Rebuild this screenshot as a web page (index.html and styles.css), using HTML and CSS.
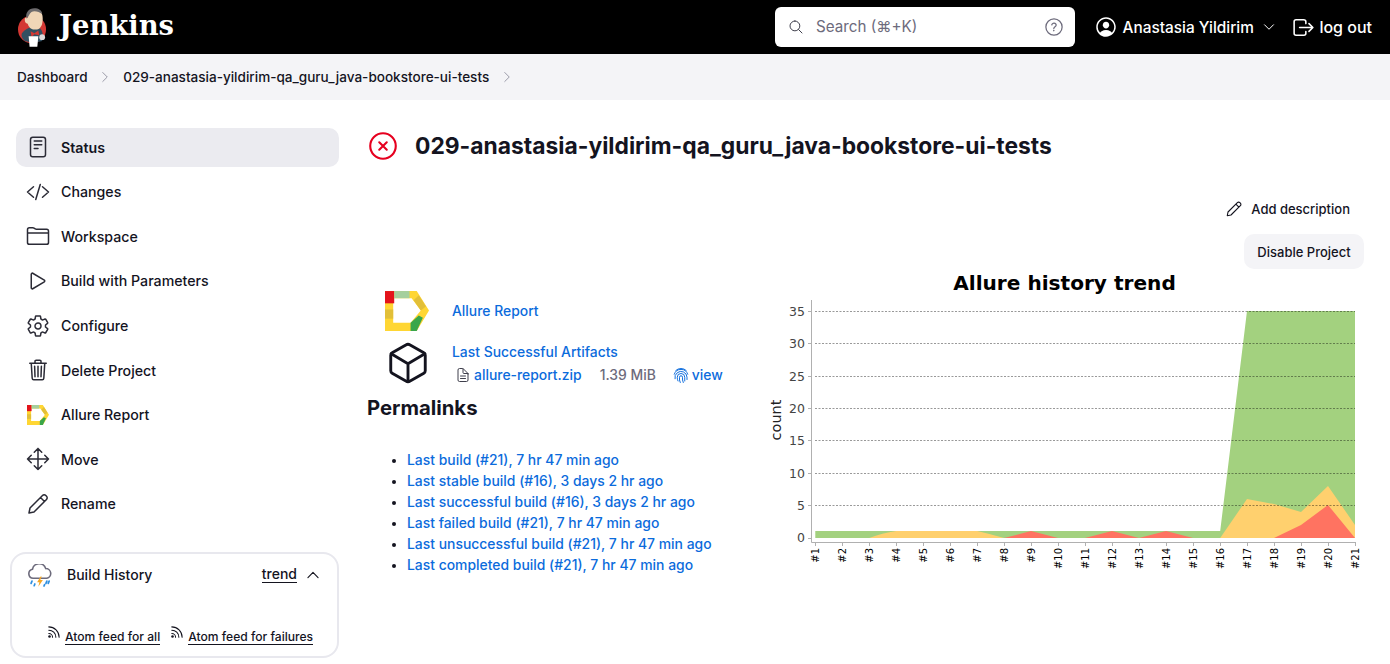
FILE: index.html
```html
<!DOCTYPE html>
<html lang="en">
<head>
<meta charset="utf-8">
<title>Jenkins</title>
<link rel="stylesheet" href="styles.css">
</head>
<body>
<svg class="defs" width="0" height="0" aria-hidden="true">
  <symbol id="allure" viewBox="0 0 43 39">
    <path fill="#ffd633" fill-rule="evenodd" d="M0 0H31L43 19 31 39H0ZM8 7V31H25L35 19 26 7Z"/>
    <path fill="#e3141b" d="M0 0H9V12H0Z"/>
    <path fill="#a5cf9d" d="M9 0H24V7H9Z"/>
    <path fill="#e2bf38" d="M33 4 40 15 35 19 28 9Z"/>
    <path fill="#e2bf38" d="M0 18H8V27H0Z"/>
    <path fill="#3aa64a" d="M25 31 33 24 37 26 31 39H25Z"/>
  </symbol>
  <symbol id="rss" viewBox="0 0 512 512">
    <path fill="none" stroke="currentColor" stroke-width="36" stroke-linecap="round" d="M96 64c193 0 352 159 352 352M96 176c132 0 240 108 240 240M96 288c71 0 128 57 128 128"/>
    <circle cx="120" cy="392" r="44" fill="currentColor"/>
  </symbol>
  <symbol id="pencil" viewBox="0 0 24 24">
    <path fill="none" stroke="currentColor" stroke-width="1.500" stroke-linejoin="round" stroke-linecap="round" d="M16.500 3.500a2.300 2.300 0 0 1 3.300 0l.7.7a2.300 2.300 0 0 1 0 3.300L8 20l-5 1 1-5ZM14.500 5.500l4 4"/>
  </symbol>
</svg>

<header class="topbar">
  <a class="brand" href="#">
    <svg class="brand-logo" viewBox="0 0 30 42">
      <circle cx="14.500" cy="23" r="14.500" fill="#d33833"/>
      <path fill="#335061" d="M4 27c3-4 7-6 10-6l9 1c3 3 3 8 2 13l-9 2-9-2c-3-3-4-5-3-8Z"/>
      <path fill="#f0d6b7" d="M10 7c2-4 9-6 13-3 3 3 3 9 2 13-1 4-4 7-8 6-4 0-6-3-7-6-2 0-3-2-3-4 0-2 1-3 3-2Z"/>
      <path fill="#6d6b6d" d="M9 12C7 6 11 1 17 1c4 0 8 2 8 6-3-2-8-4-11-2-2 1-3 5-5 7Z"/>
      <path fill="#d33833" d="M13 25l4 2 4-3 1 5-5-1-3 3Z"/>
      <path fill="#fff" d="M11 30h10l-1 11h-8Z"/>
      <circle cx="25" cy="31" r="3" fill="#dcd9d8"/>
    </svg>
    <span class="brand-name">Jenkins</span>
  </a>
  <div class="search">
    <svg class="ico-16" viewBox="0 0 512 512"><path class="ln" d="M221.09 64a157.09 157.09 0 10157.09 157.09A157.1 157.1 0 00221.09 64z"/><path class="ln" d="M338.29 338.29L448 448"/></svg>
    <span class="search-text">Search (⌘+K)</span>
    <svg class="help" viewBox="0 0 512 512"><circle class="ln" cx="256" cy="256" r="208"/><path class="ln" d="M200 202.29s.84-17.5 19.57-32.57C230.68 160.77 244 158.18 256 158c10.93-.14 20.69 1.67 26.53 4.45 10 4.76 29.47 16.38 29.47 41.09 0 26-17 37.81-36.37 50.8S251 281.43 251 296"/><circle cx="250" cy="348" r="20" fill="currentColor"/></svg>
  </div>
  <a class="user" href="#">
    <svg class="ico-user" viewBox="0 0 512 512" fill="currentColor"><path d="M258.9 48C141.92 46.42 46.42 141.92 48 258.9c1.56 112.19 92.91 203.54 205.1 205.1 116.98 1.6 212.48-93.9 210.88-210.88C462.44 140.91 371.09 49.56 258.9 48zm126.42 327.25a4 4 0 01-6.14-.32 124.27 124.27 0 00-32.35-29.59C321.37 329 289.11 320 256 320s-65.37 9-90.83 25.34a124.24 124.24 0 00-32.35 29.58 4 4 0 01-6.14.32A175.32 175.32 0 0180 259c-1.63-97.31 78.22-178.76 175.57-179S432 158.81 432 256a175.32 175.32 0 01-46.68 119.25z"/><path d="M256 144c-19.72 0-37.55 7.39-50.22 20.82s-19 32-17.57 51.93C191.11 256 221.52 288 256 288s64.83-32 67.79-71.24c1.48-19.74-4.8-38.14-17.68-51.82C293.39 151.44 275.59 144 256 144z"/></svg>
    <span>Anastasia Yildirim</span>
    <svg class="chev" viewBox="0 0 512 512"><path class="ln" d="M112 184l144 144 144-144"/></svg>
  </a>
  <a class="logout" href="#">
    <svg class="ico-logout" viewBox="0 0 512 512"><path class="ln" d="M304 336v40a40 40 0 01-40 40H104a40 40 0 01-40-40V136a40 40 0 0140-40h152c22.09 0 48 17.91 48 40v40M368 336l80-80-80-80M176 256h256"/></svg>
    <span>log out</span>
  </a>
</header>

<nav class="crumbs">
  <a href="#">Dashboard</a>
  <svg class="crumb-sep" viewBox="0 0 512 512"><path class="ln" d="M184 112l144 144-144 144"/></svg>
  <a href="#">029-anastasia-yildirim-qa_guru_java-bookstore-ui-tests</a>
  <svg class="crumb-sep" viewBox="0 0 512 512"><path class="ln" d="M184 112l144 144-144 144"/></svg>
</nav>

<main class="page">
  <aside class="side">
    <ul class="tasks">
      <li class="task active"><svg class="ico-24" viewBox="0 0 512 512"><rect class="ln" x="96" y="48" width="320" height="416" rx="48"/><path class="ln" d="M176 128h160M176 208h160M176 288h80"/></svg><span>Status</span></li>
      <li class="task"><svg class="ico-24" viewBox="0 0 512 512"><path class="ln" d="M160 368L32 256l128-112M352 368l128-112-128-112M304 96l-96 320"/></svg><span>Changes</span></li>
      <li class="task"><svg class="ico-24" viewBox="0 0 512 512"><path class="ln" d="M440 432H72a40 40 0 01-40-40V120a40 40 0 0140-40h75.89a40 40 0 0122.19 6.72l27.84 18.56a40 40 0 0022.19 6.72H440a40 40 0 0140 40v240a40 40 0 01-40 40zM32 192h448"/></svg><span>Workspace</span></li>
      <li class="task"><svg class="ico-24" viewBox="0 0 512 512"><path class="ln" d="M112 111v290c0 17.44 17 28.52 31 20.16l247.9-148.37c12.12-7.25 12.12-26.33 0-33.58L143 90.84c-14-8.36-31 2.72-31 20.16z"/></svg><span>Build with Parameters</span></li>
      <li class="task"><svg class="ico-24" viewBox="0 0 512 512"><path class="ln" d="M262.29 192.31a64 64 0 1057.4 57.4 64.13 64.13 0 00-57.4-57.4zM416.39 256a154.34 154.34 0 01-1.53 20.79l45.21 35.46a10.81 10.81 0 012.45 13.75l-42.77 74a10.81 10.81 0 01-13.14 4.59l-44.9-18.08a16.11 16.11 0 00-15.17 1.75A164.48 164.48 0 01325 400.8a15.94 15.94 0 00-8.82 12.14l-6.73 47.89a11.08 11.08 0 01-10.68 9.17h-85.54a11.11 11.11 0 01-10.69-8.87l-6.72-47.82a16.07 16.07 0 00-9-12.22 155.3 155.3 0 01-21.46-12.57 16 16 0 00-15.11-1.71l-44.89 18.07a10.81 10.81 0 01-13.14-4.58l-42.77-74a10.8 10.8 0 012.45-13.75l38.21-30a16.05 16.05 0 006-14.08c-.36-4.17-.58-8.33-.58-12.5s.21-8.27.58-12.35a16 16 0 00-6.07-13.94l-38.19-30A10.81 10.81 0 0149.48 186l42.77-74a10.81 10.81 0 0113.14-4.59l44.9 18.08a16.11 16.11 0 0015.17-1.75A164.48 164.48 0 01187 111.2a15.94 15.94 0 008.82-12.14l6.73-47.89A11.08 11.08 0 01213.23 42h85.54a11.11 11.11 0 0110.69 8.87l6.72 47.82a16.07 16.07 0 009 12.22 155.3 155.3 0 0121.46 12.57 16 16 0 0015.11 1.71l44.89-18.07a10.81 10.81 0 0113.14 4.58l42.77 74a10.8 10.8 0 01-2.45 13.75l-38.21 30a16.05 16.05 0 00-6.05 14.08c.33 4.14.55 8.3.55 12.47z"/></svg><span>Configure</span></li>
      <li class="task"><svg class="ico-24" viewBox="0 0 512 512"><path class="ln" d="M112 112l20 320c.95 18.49 14.4 32 32 32h184c17.67 0 30.87-13.51 32-32l20-320M80 112h352M192 112V72a23.93 23.93 0 0124-24h80a23.93 23.93 0 0124 24v40M256 176v224M184 176l8 224M328 176l-8 224"/></svg><span>Delete Project</span></li>
      <li class="task"><svg class="ico-allure-sm"><use href="#allure"/></svg><span>Allure Report</span></li>
      <li class="task"><svg class="ico-24" viewBox="0 0 512 512"><path class="ln" d="M176 112l80-80 80 80M255.98 32l.02 448M176 400l80 80 80-80M400 176l80 80-80 80M112 176l-80 80 80 80M32 256h448"/></svg><span>Move</span></li>
      <li class="task"><svg class="ico-24"><use href="#pencil"/></svg><span>Rename</span></li>
    </ul>

    <section class="history">
      <div class="history-head">
        <svg class="cloud" viewBox="2 2 20 21">
          <path fill="#fff" stroke="#6d6b7c" stroke-width="1.400" d="M6 14.500a4 4 0 0 1-.6-7.900A6 6 0 0 1 17 6a4.300 4.300 0 0 1 1 8.500Z"/>
          <path fill="#f5a623" d="M12.500 13 9.500 18h2l-1 4 4-6h-2.200l1.200-3Z"/>
          <path fill="none" stroke="#2f8fe0" stroke-width="1.500" stroke-linecap="round" d="M5 17l-.8 2M7.500 19.500l-.6 1.500M18 17l-.8 2M20 17l-.8 2M16 20l-.5 1.300"/>
        </svg>
        <span class="history-title">Build History</span>
        <a class="trend" href="#">trend</a>
        <svg class="chev-up" viewBox="0 0 512 512"><path class="ln" d="M112 328l144-144 144 144"/></svg>
      </div>
      <div class="feeds">
        <svg class="rss"><use href="#rss"/></svg><a href="#">Atom feed for all</a>
        <svg class="rss rss-second"><use href="#rss"/></svg><a href="#">Atom feed for failures</a>
      </div>
    </section>
  </aside>

  <div class="content">
    <div class="title-row">
      <svg class="status-ico" viewBox="0 0 512 512"><circle cx="256" cy="256" r="218" fill="none" stroke="#e6001f" stroke-width="36"/><path fill="none" stroke="#e6001f" stroke-width="36" stroke-linecap="round" d="M320 320L192 192M192 320l128-128"/></svg>
      <h1>029-anastasia-yildirim-qa_guru_java-bookstore-ui-tests</h1>
    </div>
    <div class="actions">
      <a class="btn-plain" href="#"><svg class="ico-18"><use href="#pencil"/></svg>Add description</a>
      <button class="btn-soft" type="button">Disable Project</button>
    </div>
    <div class="columns">
      <div class="left">
        <div class="link-row">
          <svg class="ico-allure"><use href="#allure"/></svg>
          <a class="link" href="#">Allure Report</a>
        </div>
        <div class="link-row artifacts">
          <svg class="ico-cube" viewBox="0 0 512 512"><path class="ln" d="M448 341.37V170.61A32 32 0 00432.11 143l-152-88.46a47.94 47.94 0 00-48.24 0L79.89 143A32 32 0 0064 170.61v170.76A32 32 0 0079.89 369l152 88.46a48 48 0 0048.24 0l152-88.46A32 32 0 00448 341.37z"/><path class="ln" d="M69 153.99l187 110 187-110M256 463.99v-200"/></svg>
          <div class="art-text">
            <a class="link art-title" href="#">Last Successful Artifacts</a>
            <div class="art-file">
              <svg class="ico-doc" viewBox="0 0 512 512"><path class="ln" d="M416 221.25V416a48 48 0 01-48 48H144a48 48 0 01-48-48V96a48 48 0 0148-48h98.75a32 32 0 0122.62 9.37l141.26 141.26a32 32 0 019.37 22.62z"/><path class="ln" d="M256 56v120a32 32 0 0032 32h120M176 288h160M176 368h160"/></svg>
              <a class="link" href="#">allure-report.zip</a>
              <span class="size">1.39 MiB</span>
              <svg class="ico-print" viewBox="0 0 24 24"><path fill="none" stroke="#0b6bdc" stroke-width="1.300" stroke-linecap="round" d="M5 6a10 10 0 0 1 14 0M3 11a9.500 9.500 0 0 1 18 0M4 17a8 8 0 0 1 3-8 8 8 0 0 1 13 6v3M8 20a9 9 0 0 1-1-5 5 5 0 0 1 10 0v5M11 22a12 12 0 0 1-1-7 2 2 0 0 1 4 0 14 14 0 0 0 1 7"/></svg>
              <a class="link" href="#">view</a>
            </div>
          </div>
        </div>
        <h2>Permalinks</h2>
        <ul class="permalinks">
          <li><a class="link" href="#">Last build (#21), 7 hr 47 min ago</a></li>
          <li><a class="link" href="#">Last stable build (#16), 3 days 2 hr ago</a></li>
          <li><a class="link" href="#">Last successful build (#16), 3 days 2 hr ago</a></li>
          <li><a class="link" href="#">Last failed build (#21), 7 hr 47 min ago</a></li>
          <li><a class="link" href="#">Last unsuccessful build (#21), 7 hr 47 min ago</a></li>
          <li><a class="link" href="#">Last completed build (#21), 7 hr 47 min ago</a></li>
        </ul>
      </div>

      <svg class="chart" viewBox="760 270 604 310">
        <text class="c-title" x="1064.500" y="290" text-anchor="middle">Allure history trend</text>
        <path class="c-green" d="M815.300 531H1220.200L1247 311H1355V538H815.300Z"/>
        <path class="c-yellow" d="M869.300 538Q882 533 896.300 531H977.200Q990 534 1004.200 538ZM1220.200 538 1247 499 1274 504 1301 512 1328 486 1355 525V538Z"/>
        <path class="c-red" d="M1004.200 538 1031 531 1058 538ZM1085 538 1112 531 1139 538 1166 531 1193 538ZM1274 538 1301 525 1328 505 1355 538Z"/>
        <path class="c-grid" d="M815 311.500H1355M815 343.500H1355M815 376.500H1355M815 408.500H1355M815 440.500H1355M815 473.500H1355M815 505.500H1355"/>
        <path class="c-axis" d="M811.500 300V542.500H1355.500"/>
        <path class="c-axis" d="M808 311.500h4M808 343.500h4M808 376.500h4M808 408.500h4M808 440.500h4M808 473.500h4M808 505.500h4M808 538.500h4"/>
        <path class="c-axis" d="M815.500 542v4M842.500 542v4M869.500 542v4M896.500 542v4M923.500 542v4M950.500 542v4M977.500 542v4M1004.500 542v4M1031.500 542v4M1058.500 542v4M1085.500 542v4M1112.500 542v4M1139.500 542v4M1166.500 542v4M1193.500 542v4M1220.500 542v4M1247.500 542v4M1274.500 542v4M1301.500 542v4M1328.500 542v4M1355.500 542v4"/>
        <g class="c-num" text-anchor="end">
          <text x="805" y="315.500">35</text><text x="805" y="348">30</text><text x="805" y="380.500">25</text><text x="805" y="412.500">20</text><text x="805" y="444.500">15</text><text x="805" y="477.500">10</text><text x="805" y="510">5</text><text x="805" y="542">0</text>
        </g>
        <text class="c-count" transform="translate(781 420) rotate(-90)" text-anchor="middle">count</text>
        <g class="c-tick" text-anchor="end">
          <text transform="translate(819 548) rotate(-90)">#1</text>
          <text transform="translate(846 548) rotate(-90)">#2</text>
          <text transform="translate(873 548) rotate(-90)">#3</text>
          <text transform="translate(900 548) rotate(-90)">#4</text>
          <text transform="translate(927 548) rotate(-90)">#5</text>
          <text transform="translate(954 548) rotate(-90)">#6</text>
          <text transform="translate(981 548) rotate(-90)">#7</text>
          <text transform="translate(1008 548) rotate(-90)">#8</text>
          <text transform="translate(1035 548) rotate(-90)">#9</text>
          <text transform="translate(1062 548) rotate(-90)">#10</text>
          <text transform="translate(1089 548) rotate(-90)">#11</text>
          <text transform="translate(1116 548) rotate(-90)">#12</text>
          <text transform="translate(1143 548) rotate(-90)">#13</text>
          <text transform="translate(1170 548) rotate(-90)">#14</text>
          <text transform="translate(1197 548) rotate(-90)">#15</text>
          <text transform="translate(1224 548) rotate(-90)">#16</text>
          <text transform="translate(1251 548) rotate(-90)">#17</text>
          <text transform="translate(1278 548) rotate(-90)">#18</text>
          <text transform="translate(1305 548) rotate(-90)">#19</text>
          <text transform="translate(1332 548) rotate(-90)">#20</text>
          <text transform="translate(1359 548) rotate(-90)">#21</text>
        </g>
      </svg>
    </div>
  </div>
</main>
</body>
</html>
```
FILE: styles.css
```css
* { box-sizing: border-box; }
html, body { margin: 0; padding: 0; height: 664px; overflow: hidden; }
body { background: #fff; color: #14141f; font-family: Inter, "Noto Sans", sans-serif; font-size: 14px; }
a { color: inherit; text-decoration: none; }
svg { display: block; flex: none; }
.defs { position: absolute; }
.ln { fill: none; stroke: currentColor; stroke-width: 32; stroke-linecap: round; stroke-linejoin: round; }

.ico-16 { width: 16px; height: 16px; }
.ico-18 { width: 18px; height: 18px; }
.ico-24 { width: 24px; height: 24px; }
.ico-user { width: 24px; height: 24px; }
.ico-logout { width: 25px; height: 25px; }

/* top bar */
.topbar { height: 54px; background: #000; color: #fff; display: flex; align-items: center; padding: 0 18px; }
.brand { display: flex; align-items: center; gap: 12px; margin-right: auto; }
.brand-logo { width: 29px; height: 41px; }
.brand-name { font-family: "DejaVu Serif", serif; font-weight: 700; font-size: 27.4px; margin-top: -4px; }
.search { width: 300px; height: 40px; margin-top: -1px; background: #fff; color: #3f3f4c; border-radius: 6px; display: flex; align-items: center; padding: 0 11px 0 13px; }
.search-text { margin-left: 12px; color: #6d6b7c; font-size: 15.2px; flex: 1; }
.help { width: 20px; height: 20px; color: #6d6b7c; }
.user { display: flex; align-items: center; margin-left: 19px; font-size: 15.4px; font-weight: 500; gap: 4.5px; }
.chev { width: 16px; height: 16px; margin-left: 3px; }
.logout { display: flex; align-items: center; gap: 3px; margin-left: 14px; font-size: 16px; font-weight: 500; }

/* breadcrumbs */
.crumbs { height: 46px; background: #f4f4f7; display: flex; align-items: center; padding-left: 17px; font-size: 13.55px; font-weight: 500; }
.crumb-sep { width: 16px; height: 16px; margin: 0 10px 0 9.5px; color: #9a9aa8; }

/* page */
.page { display: flex; padding-top: 28px; }
.side { width: 339px; padding-left: 10px; flex: none; }
.tasks { list-style: none; margin: -.2px 0 0 6px; padding: 0; display: flex; flex-direction: column; gap: 5.55px; }
.task { height: 39px; display: flex; align-items: center; gap: 11px; padding-left: 10px; font-size: 14.2px; font-weight: 500; border-radius: 10px; color: #14141f; }
.task svg { color: #2b2b36; }
.active { background: #ebebf0; font-weight: 600; }
.ico-allure-sm { width: 22px; height: 20px; margin-left: 1px; margin-right: 1px; }

.history { margin-top: 28.7px; height: 106px; border: 2px solid #e8e8ee; border-radius: 16px; padding: 11px 17px 0 16px; }
.history-head { display: flex; align-items: center; height: 20px; }
.cloud { width: 24px; height: 24px; margin-right: 15px; margin-top: 2px; }
.history-title { font-weight: 500; font-size: 14px; flex: 1; }
.trend { border-bottom: 1px solid #14141f; font-weight: 500; line-height: 16px; }
.chev-up { width: 18px; height: 18px; margin-left: 7px; margin-right: -2px; }
.feeds { display: flex; align-items: flex-end; margin-top: 40px; padding-left: 18px; font-size: 12.1px; font-weight: 500; }
.feeds a { border-bottom: 1px solid #14141f; line-height: 14px; margin-left: 4px; }
.rss { width: 15px; height: 15px; margin-bottom: 5px; }
.rss-second { margin-left: 9px; }

/* content */
.content { flex: 1; padding: 0 26px 0 28px; min-width: 0; }
.title-row { display: flex; align-items: center; height: 36px; gap: 17px; padding-left: 1px; }
.status-ico { width: 30px; height: 30px; }
h1 { margin: 0; font-size: 22.83px; font-weight: 700; line-height: 36px; }
.actions { display: flex; flex-direction: column; align-items: flex-end; margin-top: 27px; gap: 8px; }
.btn-plain { height: 35px; display: flex; align-items: center; gap: 8px; padding: 0 14px; font-size: 13px; font-weight: 500; }
.btn-soft { height: 35px; width: 120px; border: 0; border-radius: 10px; background: #f4f4f7; color: #14141f; font: 500 13px Inter, sans-serif; padding: 0; }

.columns { display: grid; grid-template-columns: 393px 604px; margin-top: 1px; }
.left { padding-top: 21px; font-size: 13.92px; }
.link { color: #0b6bdc; font-weight: 500; }
.link-row { display: flex; align-items: center; padding-left: 18px; }
.ico-allure { width: 44px; height: 40px; margin-right: 23px; }
.artifacts { align-items: flex-start; margin-top: 11px; }
.ico-cube { width: 46px; height: 46px; margin-top: -2px; margin-right: 21px; color: #14141f; }
.art-title { display: block; line-height: 20px; }
.art-file { display: flex; align-items: center; height: 25px; padding-left: 5px; padding-top: 1px; }
.ico-doc { width: 16px; height: 16px; margin-left: -2px; margin-right: 3px; color: #3f3f4c; }
.size { color: #6d6b7c; margin-left: 18px; font-weight: 500; }
.ico-print { width: 18px; height: 18px; margin-left: 16px; margin-right: 2px; }

h2 { margin: 8px 0 0; font-size: 20.3px; font-weight: 700; line-height: 26px; }
.permalinks { margin: 29px 0 0; padding-left: 40px; line-height: 21px; }
.chart { width: 604px; height: 310px; }
.c-title { font: 700 20.100px "DejaVu Sans", sans-serif; fill: #000; }
.c-green { fill: #a3d17f; }
.c-yellow { fill: #ffd06e; }
.c-red { fill: #ff7361; }
.c-grid { fill: none; stroke: #000; stroke-opacity: .4; stroke-dasharray: 2 1.500; stroke-width: 1; }
.c-axis { fill: none; stroke: #b0b0b0; stroke-width: 1; }
.c-num { font: 12.500px "DejaVu Sans", sans-serif; fill: #444; }
.c-count { font: 14.500px "DejaVu Sans", sans-serif; fill: #222; }
.c-tick { font: 10px "DejaVu Sans", sans-serif; fill: #000; }
```
